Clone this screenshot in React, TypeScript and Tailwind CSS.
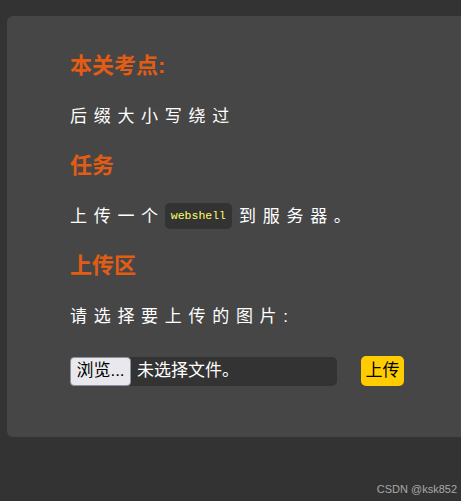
import React from 'react'

const cjk = "font-['Liberation_Sans','Noto_Sans_CJK_SC',sans-serif]"

const Heading = ({ text }: { text: string }) => (
  <div className="h-[50px] flex items-center">
    <h2 className="text-[22px] font-bold text-[#e25d13] leading-none">{text}</h2>
  </div>
)

const Line = ({ children }: { children: React.ReactNode }) => (
  <div className="h-[50px] flex items-center text-[17px] text-white tracking-[6.7px] leading-none">
    {children}
  </div>
)

export default function App() {
  return (
    <div className={`relative w-[461px] h-[501px] overflow-hidden bg-[#333333] pt-4 ${cjk}`}>
      <div className="ml-[7px] w-[480px] h-[421px] rounded-md bg-[#464646] pl-[63px] pt-[25px]">
        <Heading text="本关考点:" />
        <Line>后缀大小写绕过</Line>
        <Heading text="任务" />
        <Line>
          上传一个
          <code className="inline-flex items-center h-[26px] px-[6px] mr-[7px] rounded-[5px] bg-[#333333] text-[#ffff66] text-[11.5px] tracking-normal font-['Liberation_Mono',monospace]">
            webshell
          </code>
          到服务器。
        </Line>
        <Heading text="上传区" />
        <Line>请选择要上传的图片:</Line>
        <div className="mt-[15px] flex items-center">
          <div className="w-[267px] h-[29px] rounded-[5px] bg-[#333333] flex items-center">
            <span className="h-[29px] w-[61px] flex items-center justify-center rounded-[4px] border border-[#8f8f9d] bg-[#e9e9ed] text-black text-[17px]">
              浏览...
            </span>
            <span className="ml-[6px] text-white text-[17px]">未选择文件。</span>
          </div>
          <button className="ml-6 w-[43px] h-[30px] rounded-[5px] bg-[#ffcc00] text-black text-[17px] flex items-center justify-center">
            上传
          </button>
        </div>
      </div>
      <div className="absolute right-[4px] bottom-[4px] text-[11px] text-[#a8a8a8] font-['Liberation_Sans',sans-serif]">
        CSDN @ksk852
      </div>
    </div>
  )
}
